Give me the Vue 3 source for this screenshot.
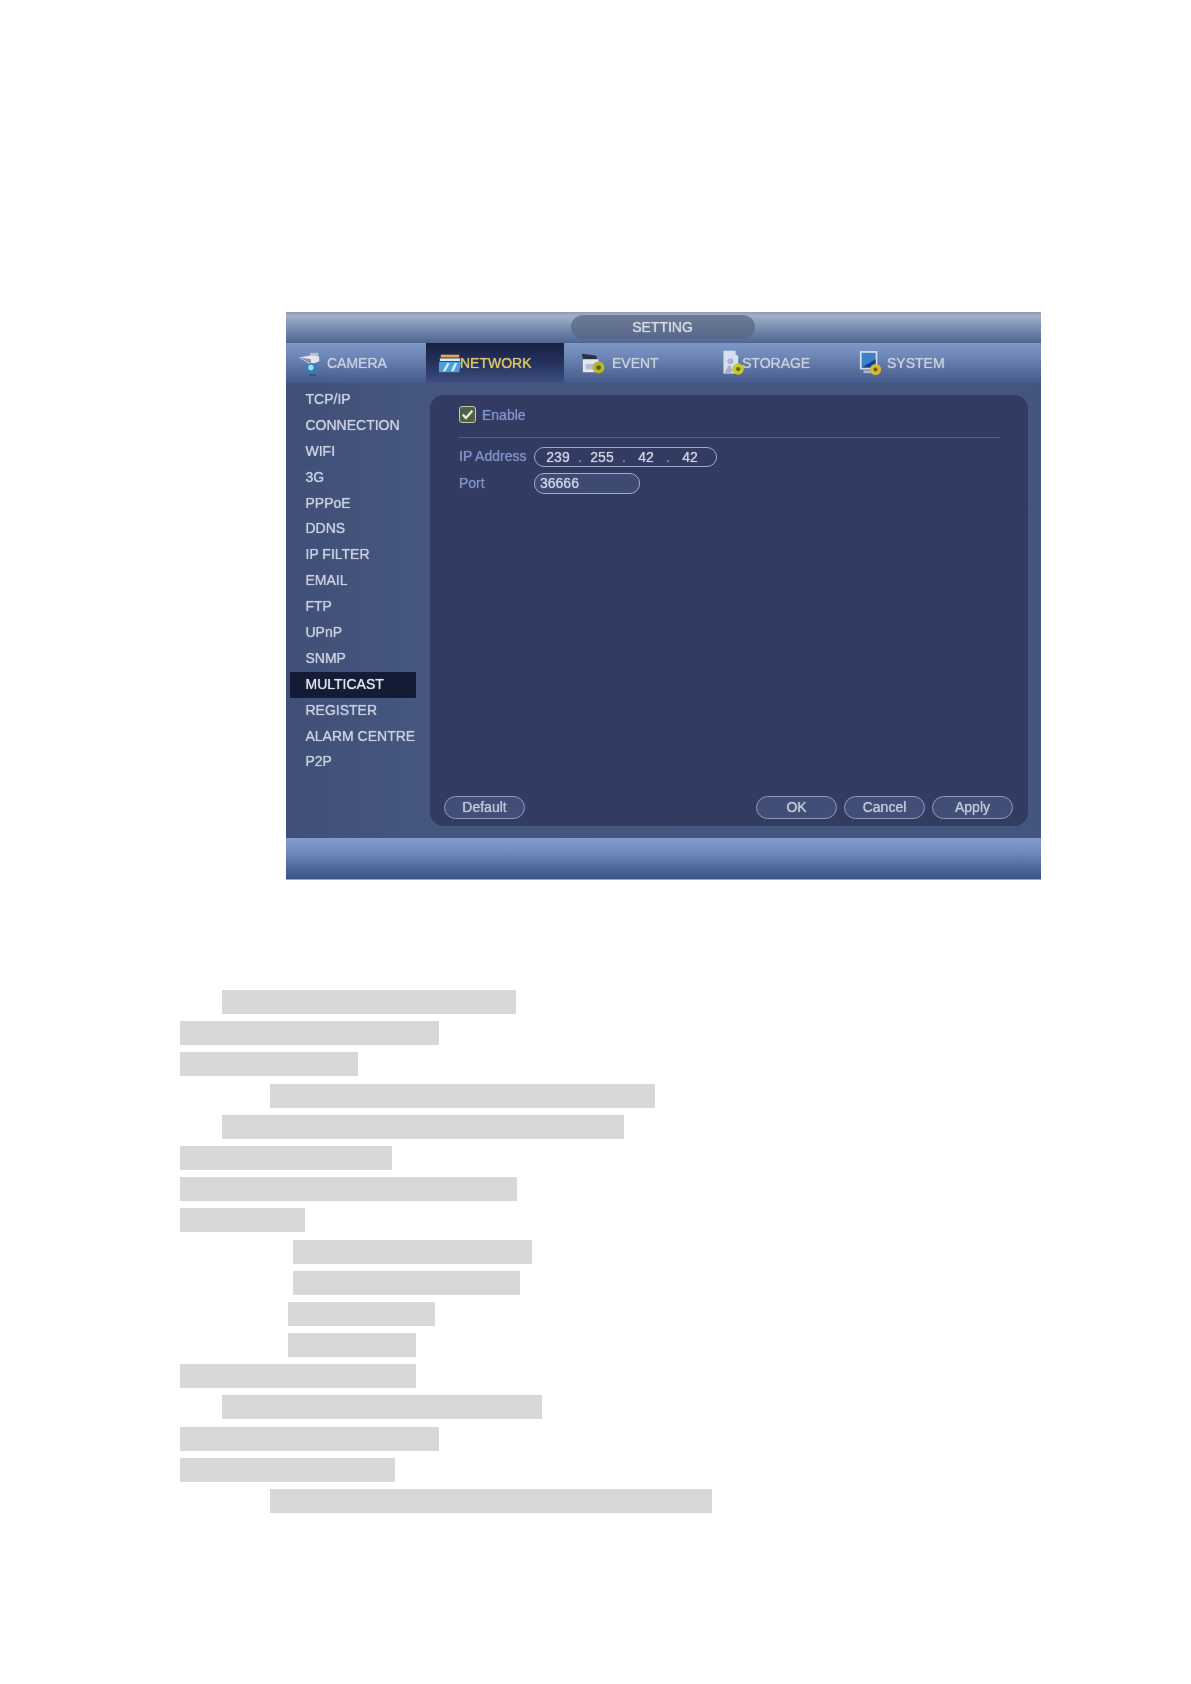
<script setup>
const menu = ['TCP/IP','CONNECTION','WIFI','3G','PPPoE','DDNS','IP FILTER','EMAIL','FTP','UPnP','SNMP','MULTICAST','REGISTER','ALARM CENTRE','P2P']
const octets = ['239','255','42','42']
const bars = [
  [222,516],[180,439],[180,358],[270,655],[222,624],[180,392],[180,517],[180,305],
  [293,532],[293,520],[288,435],[288,416],[180,416],[222,542],[180,439],[180,395],[270,712]
]
</script>

<template>
  <div class="page">
    <section class="window">
      <header class="titlebar"><div class="pill">SETTING</div></header>
      <nav class="tabs">
        <div class="tab tab-camera">
          <svg class="icon" viewBox="0 0 26 28">
            <path d="M1 8l16-3 6 2v5l-9 4z" fill="#dfe4ee"/>
            <path d="M13 3h9v3h-9z" fill="#b9c2d4"/>
            <path d="M2 8l12 2v5z" fill="#8793ad"/>
            <circle cx="15" cy="20" r="6" fill="#2d7fb8"/>
            <circle cx="14" cy="19" r="3" fill="#a8d8ee"/>
            <path d="M12 26h7v2h-7z" fill="#41506f"/>
          </svg>
          <span>CAMERA</span>
        </div>
        <div class="tab tab-active tab-network">
          <svg class="icon" viewBox="0 0 26 24">
            <path d="M3 3h20v3H3z" fill="#e8a948"/>
            <path d="M2 7h22v3H2z" fill="#dfe7ee"/>
            <path d="M1 11h24l-2 11H1z" fill="#4b9fd8"/>
            <path d="M5 21l5-9h3l-5 9zM14 21l4-9h3l-4 9z" fill="#cfeaf8"/>
          </svg>
          <span class="active-label">NETWORK</span>
        </div>
        <div class="tab tab-event">
          <svg class="icon" viewBox="0 0 26 26">
            <path d="M1 3l15 2 2 4H2z" fill="#2d3246"/>
            <path d="M2 9h17v14H2z" fill="#e4e8ee"/>
            <path d="M5 14h9v6H5z" fill="#b6bfd0"/>
            <circle cx="19" cy="18" r="6.5" fill="#b5b81f"/>
            <circle cx="19" cy="18" r="2.5" fill="#4f5a2a"/>
          </svg>
          <span>EVENT</span>
        </div>
        <div class="tab tab-storage">
          <svg class="icon" viewBox="0 0 26 30">
            <path d="M2 1h14v4l3 2v20H2z" fill="#d7e0f0"/>
            <circle cx="10" cy="13" r="3.5" fill="#a9b3d4"/>
            <path d="M4 24l5-7 4 6-3 4H4z" fill="#b3a9c8"/>
            <circle cx="19" cy="22" r="6.5" fill="#c8c91c"/>
            <circle cx="19" cy="22" r="2.5" fill="#5e6426"/>
          </svg>
          <span>STORAGE</span>
        </div>
        <div class="tab tab-system">
          <svg class="icon" viewBox="0 0 26 28">
            <path d="M2 1h19v20H2z" fill="#cfd9ea"/>
            <path d="M4 3h15v16H4z" fill="#3b80c8"/>
            <path d="M4 19l15-9v9z" fill="#123e8c"/>
            <path d="M6 22h10v3H6z" fill="#aeb7c9"/>
            <circle cx="19" cy="21" r="6" fill="#d6b92a"/>
            <circle cx="19" cy="21" r="2.2" fill="#6b5e20"/>
          </svg>
          <span>SYSTEM</span>
        </div>
      </nav>
      <div class="body">
        <aside class="sidebar">
          <div v-for="item in menu" :key="item" class="menu-item" :class="{ selected: item === 'MULTICAST' }">{{ item }}</div>
        </aside>
        <main class="panel">
          <div class="enable">
            <span class="check">
              <svg viewBox="0 0 14 14" class="tick"><path d="M2.5 7l3 3.2L11.5 3.5" fill="none" stroke="#e8f0d8" stroke-width="2.2"/></svg>
            </span>
            <span class="label-text">Enable</span>
          </div>
          <div class="divider"></div>
          <div class="field ip-field">
            <span class="label-text field-label">IP Address</span>
            <div class="input ip-input">
              <template v-for="(o, i) in octets" :key="i">
                <span class="octet">{{ o }}</span>
                <span v-if="i < 3" class="dot">.</span>
              </template>
            </div>
          </div>
          <div class="field port-field">
            <span class="label-text field-label">Port</span>
            <div class="input port-input">36666</div>
          </div>
          <div class="actions">
            <button class="btn">Default</button>
            <div class="right-actions">
              <button class="btn">OK</button>
              <button class="btn">Cancel</button>
              <button class="btn">Apply</button>
            </div>
          </div>
        </main>
      </div>
      <footer class="statusbar"></footer>
    </section>

    <div class="redacted">
      <div
        v-for="(b, i) in bars"
        :key="i"
        class="bar"
        :style="{ marginLeft: b[0] + 'px', width: (b[1] - b[0]) + 'px' }"
      ></div>
    </div>
  </div>
</template>

<style>
html, body { margin: 0; background: #fff; }
</style>

<style scoped>
.page {
  width: 1191px;
  height: 1684px;
  padding-top: 312px;
  box-sizing: border-box;
  background: #fff;
  overflow: hidden;
  font-family: "Liberation Sans", Arial, sans-serif;
}
.window {
  width: 755px;
  height: 568px;
  margin-left: 286px;
  display: flex;
  flex-direction: column;
  background: #44557f;
  color: #c9cfdf;
  font-size: 14px;
  text-shadow: 0 0 1px currentColor;
  filter: blur(0.6px);
}
.titlebar {
  height: 31px;
  box-sizing: border-box;
  padding-top: 3px;
  display: flex;
  justify-content: center;
  background: linear-gradient(#8b9ab5 0, #a3b1c8 12%, #7f93b5 45%, #5b7299 85%, #4f658f 100%);
}
.pill {
  width: 184px;
  height: 24px;
  border-radius: 12px;
  background: linear-gradient(#6e7b93, #55678a);
  color: #d6dbe4;
  text-align: center;
  line-height: 24px;
  margin-right: 2px;
}
.tabs {
  height: 40px;
  display: flex;
  background: linear-gradient(#7d97c6 0, #6f88b7 30%, #546b9a 75%, #45598a 100%);
}
.tab {
  display: flex;
  align-items: center;
  box-sizing: border-box;
}
.tab-camera { width: 140px; padding-left: 12px; gap: 5px; }
.tab-active {
  background: linear-gradient(#172143 0, #27345f 55%, #3d4f7e 100%);
}
.tab-network { width: 138px; padding-left: 12px; }
.active-label { color: #dcc668; margin-left: -2px; }
.tab-event { width: 141px; padding-left: 17px; gap: 7px; }
.tab-storage { width: 137px; padding-left: 16px; }
.tab-storage span { margin-left: -3px; }
.tab-system { flex: 1; padding-left: 16px; gap: 5px; }
.icon { flex: none; height: 26px; width: 24px; }
.body {
  flex: 1;
  display: flex;
  padding: 12px 13px 12px 0;
  background: linear-gradient(90deg, #3f4f78 0, #45567f 18%, #44557f 100%);
  min-height: 0;
}
.sidebar {
  width: 144px;
  flex: none;
  padding-left: 4px;
  box-sizing: border-box;
  margin-top: -8px;
}
.menu-item {
  height: 25.9px;
  line-height: 25.9px;
  padding-left: 15.5px;
  white-space: nowrap;
}
.menu-item.selected {
  width: 126px;
  box-sizing: border-box;
  background: #131b35;
  color: #e0e4ec;
}
.panel {
  flex: 1;
  display: flex;
  flex-direction: column;
  background: #323b61;
  border-radius: 14px;
  padding: 11px 15px 7px 14px;
  min-width: 0;
}
.enable {
  display: flex;
  align-items: center;
  gap: 6px;
  height: 17px;
  margin-left: 15px;
}
.check {
  width: 15px;
  height: 15px;
  border: 1.5px solid #c9c9a4;
  border-radius: 3px;
  background: #4f5f48;
  display: block;
  flex: none;
}
.tick { display: block; width: 15px; height: 15px; }
.label-text { color: #7f92c8; }
.divider {
  height: 1px;
  margin: 14px 13px 9px 15px;
  background: #55628c;
  flex: none;
}
.field {
  display: flex;
  align-items: center;
  margin-left: 15px;
}
.field-label { width: 75px; flex: none; margin-top: -2px; }
.input {
  box-sizing: border-box;
  border: 1.5px solid #a1acc9;
  border-radius: 10px;
  background: #3d4a72;
  color: #ccd2e0;
  display: flex;
  align-items: center;
  padding-bottom: 1px;
}
.ip-field { height: 20px; }
.ip-input {
  width: 183px;
  height: 20px;
  padding-left: 10.5px;
  background: #323b61;
}
.octet { width: 25px; text-align: center; }
.dot { width: 19px; text-align: center; color: #8793b3; }
.port-field { height: 21px; margin-top: 6px; }
.port-input {
  width: 106px;
  height: 21px;
  padding-left: 5px;
}
.actions {
  margin-top: auto;
  display: flex;
  justify-content: space-between;
}
.right-actions { display: flex; gap: 7px; }
.btn {
  width: 81px;
  height: 23px;
  padding: 0 0 2px;
  border: 1.5px solid #8f9cc0;
  border-radius: 12px;
  background: #414f78;
  color: #c0c7dc;
  font: 14px "Liberation Sans", Arial, sans-serif;
  text-shadow: 0 0 1px currentColor;
}
.statusbar {
  height: 42px;
  flex: none;
  background: linear-gradient(#7f9ccd 0, #6f8cbd 35%, #4f6a9c 70%, #3c5385 100%);
  border-bottom: 1px solid #9aa4b8;
  box-sizing: border-box;
}
.redacted {
  margin-top: 110px;
  display: flex;
  flex-direction: column;
  gap: 7.19px;
}
.bar {
  height: 24px;
  background: #d8d8d8;
}
</style>
